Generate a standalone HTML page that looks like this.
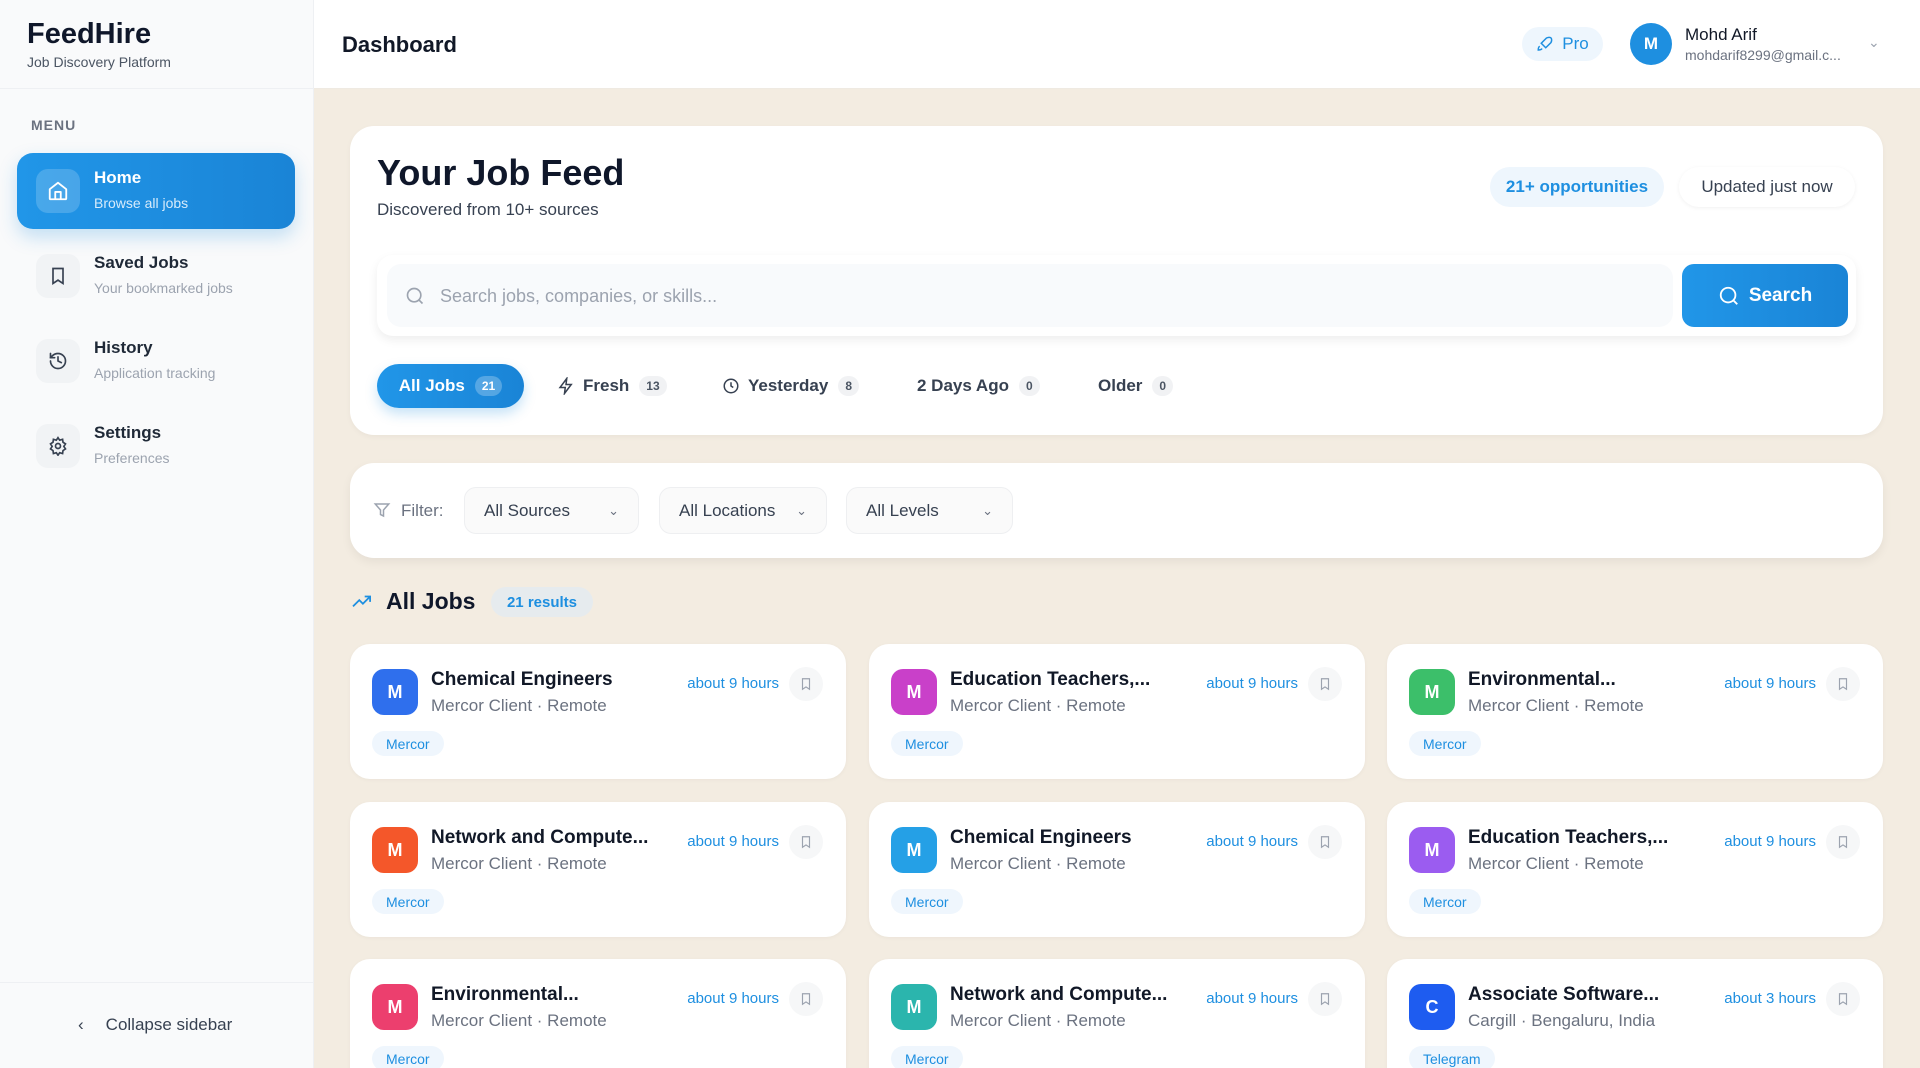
<!DOCTYPE html>
<html style="width:1920px;height:1068px;overflow:hidden"><head><meta charset="utf-8"><style>
*{box-sizing:border-box;margin:0;padding:0}
body{width:1920px;height:1068px;overflow:hidden;font-family:"Liberation Sans",sans-serif;background:#f3ece1;color:#111827}
#wrap{position:relative;width:1920px;height:1068px;overflow:hidden;background:#f3ece1}
.abs{position:absolute}
.side{left:0;top:0;width:314px;height:1068px;background:#f9fafb;border-right:1px solid #eef0f3}
.nav{position:absolute;left:17px;width:278px;height:76px;border-radius:16px}
.nav .ic{position:absolute;left:19px;top:16px;width:44px;height:44px;border-radius:12px;background:#f1f3f5;display:flex;align-items:center;justify-content:center}
.nav .t{position:absolute;left:77px;top:15px;font-size:17px;font-weight:bold;color:#1f2937}
.nav .s{position:absolute;left:77px;top:42px;font-size:14px;color:#9ca3af}
.card{background:#fff;border-radius:24px;box-shadow:0 2px 6px rgba(0,0,0,.04)}
.pill{position:absolute;border-radius:20px;display:flex;align-items:center;justify-content:center;font-size:17px}
.tab{position:absolute;top:364px;height:44px;display:flex;align-items:center;font-size:17px;font-weight:bold;color:#374151}
.cnt{display:inline-block;margin-left:10px;background:#f1f2f4;border-radius:10px;font-size:12px;padding:3px 7px;color:#4b5563}
.sel{position:absolute;top:487px;height:47px;border:1px solid #eeeff1;background:#fafafa;border-radius:12px;font-size:17px;color:#374151;padding:0 19px;display:flex;align-items:center;justify-content:space-between}
.job{position:absolute;width:496px;height:135px;background:#fff;border-radius:20px;box-shadow:0 1px 4px rgba(0,0,0,.04)}
.job .lg{position:absolute;left:22px;top:25px;width:46px;height:46px;border-radius:12px;color:#fff;font-weight:bold;font-size:18px;display:flex;align-items:center;justify-content:center}
.job .tt{position:absolute;left:81px;top:25px;font-size:19px;font-weight:bold;color:#111827}
.job .sb{position:absolute;left:81px;top:52px;font-size:17px;color:#6b7280}
.job .tm{position:absolute;right:67px;top:31px;font-size:15px;color:#1e8fe0}
.job .bm{position:absolute;left:439px;top:23px;width:34px;height:34px;border-radius:50%;background:#f6f7f8;display:flex;align-items:center;justify-content:center}
.job .tg{position:absolute;left:22px;top:87px;height:25px;padding:0 14px;border-radius:13px;background:#eff6fd;color:#1e8fe0;font-size:14px;display:flex;align-items:center}
</style></head><body><div id="wrap">
<div class="abs side">
  <div class="abs" style="left:27px;top:18px;font-size:29px;font-weight:bold;color:#0f172a">FeedHire</div>
  <div class="abs" style="left:27px;top:54px;font-size:14px;color:#4b5563">Job Discovery Platform</div>
  <div class="abs" style="left:0;top:88px;width:314px;height:1px;background:#eef0f3"></div>
  <div class="abs" style="left:31px;top:117px;font-size:14px;font-weight:bold;color:#6b7280;letter-spacing:1px">MENU</div>
  <div class="nav" style="top:153px;background:linear-gradient(90deg,#2196e8,#1a84d6);box-shadow:0 8px 18px rgba(30,143,224,.25)">
    <div class="ic" style="background:rgba(255,255,255,.18)"><svg width="22" height="22" viewBox="0 0 24 24" fill="none" stroke="#fff" stroke-width="2" stroke-linejoin="round"><path d="M3 10l9-7 9 7v10a1 1 0 01-1 1H4a1 1 0 01-1-1z"/><path d="M9 21v-8h6v8"/></svg></div>
    <div class="t" style="color:#fff">Home</div><div class="s" style="color:#d6ebfb">Browse all jobs</div>
  </div>
  <div class="nav" style="top:238px"><div class="ic"><svg width="20" height="20" viewBox="0 0 24 24" fill="none" stroke="#374151" stroke-width="2"><path d="M6 3h12v18l-6-4-6 4z"/></svg></div><div class="t">Saved Jobs</div><div class="s">Your bookmarked jobs</div></div>
  <div class="nav" style="top:323px"><div class="ic"><svg width="20" height="20" viewBox="0 0 24 24" fill="none" stroke="#374151" stroke-width="2" stroke-linecap="round"><path d="M3 12a9 9 0 109-9 9.7 9.7 0 00-6.7 2.7L3 8"/><path d="M3 3v5h5"/><path d="M12 7v5l4 2"/></svg></div><div class="t">History</div><div class="s">Application tracking</div></div>
  <div class="nav" style="top:408px"><div class="ic"><svg width="20" height="20" viewBox="0 0 24 24" fill="none" stroke="#374151" stroke-width="2"><circle cx="12" cy="12" r="3"/><path d="M12 2l2 3 3.5-1 .5 3.5 3 2-2 3 2 3-3 2-.5 3.5-3.5-1-2 3-2-3-3.5 1-.5-3.5-3-2 2-3-2-3 3-2 .5-3.5 3.5 1z"/></svg></div><div class="t">Settings</div><div class="s">Preferences</div></div>
  <div class="abs" style="left:0;top:982px;width:314px;height:1px;background:#eef0f3"></div>
  <div class="abs" style="left:78px;top:1015px;font-size:17px;color:#374151"><span style="margin-right:22px">‹</span>Collapse sidebar</div>
</div>
<div class="abs" style="left:314px;top:0;width:1606px;height:89px;background:#fff;border-bottom:1px solid #efeae2"></div>
<div class="abs" style="left:342px;top:32px;font-size:22px;font-weight:bold;color:#111827">Dashboard</div>
<div class="pill" style="left:1522px;top:27px;width:81px;height:34px;background:#eef6fd;color:#1e8fe0;font-size:17px"><svg width="18" height="18" viewBox="0 0 24 24" fill="none" stroke="#1e8fe0" stroke-width="2" style="margin-right:8px"><path d="M5 15c-2 1-2 5-2 5s4 0 5-2M14 4c4-2 6 0 6 0s2 2 0 6l-7 7-6-6z"/></svg>Pro</div>
<div class="abs" style="left:1630px;top:23px;width:42px;height:42px;border-radius:50%;background:#1e8fe0;color:#fff;font-weight:bold;font-size:17px;display:flex;align-items:center;justify-content:center">M</div>
<div class="abs" style="left:1685px;top:25px;font-size:17px;color:#111827">Mohd Arif</div>
<div class="abs" style="left:1685px;top:47px;font-size:14px;color:#6b7280">mohdarif8299@gmail.c...</div>
<div class="abs" style="left:1868px;top:34px;font-size:14px;color:#9ca3af">⌄</div>

<div class="abs card" style="left:350px;top:126px;width:1533px;height:309px"></div>
<div class="abs" style="left:377px;top:152px;font-size:36px;font-weight:bold;color:#0f172a">Your Job Feed</div>
<div class="abs" style="left:377px;top:200px;font-size:17px;color:#374151">Discovered from 10+ sources</div>
<div class="pill" style="left:1490px;top:167px;width:174px;height:40px;background:#eef6fd;color:#1e8fe0;font-weight:bold">21+ opportunities</div>
<div class="pill" style="left:1679px;top:167px;width:176px;height:40px;background:#fff;box-shadow:0 1px 4px rgba(0,0,0,.06);color:#374151">Updated just now</div>
<div class="abs" style="left:377px;top:255px;width:1479px;height:81px;border-radius:16px;background:#fff;box-shadow:0 4px 10px rgba(0,0,0,.07)"></div>
<div class="abs" style="left:387px;top:264px;width:1286px;height:63px;border-radius:14px;background:#f8fafc"></div>
<svg class="abs" style="left:405px;top:286px" width="20" height="20" viewBox="0 0 24 24" fill="none" stroke="#9ca3af" stroke-width="2"><circle cx="11" cy="11" r="8"/><path d="M21 21l-4.3-4.3"/></svg>
<div class="abs" style="left:440px;top:286px;font-size:18px;color:#9ca3af">Search jobs, companies, or skills...</div>
<div class="abs" style="left:1682px;top:264px;width:166px;height:63px;border-radius:12px;background:linear-gradient(90deg,#2196e8,#1a84d6);color:#fff;font-size:19px;font-weight:bold;display:flex;align-items:center;justify-content:center"><svg width="22" height="22" viewBox="0 0 24 24" fill="none" stroke="#fff" stroke-width="2" style="margin-right:9px"><circle cx="11" cy="11" r="8"/><path d="M21 21l-4.3-4.3"/></svg>Search</div>

<div class="tab" style="left:377px;width:147px;border-radius:22px;background:linear-gradient(90deg,#2196e8,#1a84d6);color:#fff;justify-content:center;box-shadow:0 6px 12px rgba(30,143,224,.25)">All Jobs<span class="cnt" style="background:rgba(255,255,255,.25);color:#fff">21</span></div>
<div class="tab" style="left:557px"><svg width="18" height="18" viewBox="0 0 24 24" fill="none" stroke="#374151" stroke-width="2" style="margin-right:8px"><path d="M13 2L4 14h7l-1 8 9-12h-7z"/></svg>Fresh<span class="cnt">13</span></div>
<div class="tab" style="left:722px"><svg width="18" height="18" viewBox="0 0 24 24" fill="none" stroke="#374151" stroke-width="2" style="margin-right:8px"><circle cx="12" cy="12" r="9"/><path d="M12 7v5l3 2"/></svg>Yesterday<span class="cnt">8</span></div>
<div class="tab" style="left:917px">2 Days Ago<span class="cnt">0</span></div>
<div class="tab" style="left:1098px">Older<span class="cnt">0</span></div>

<div class="abs card" style="left:350px;top:463px;width:1533px;height:95px;box-shadow:0 4px 10px rgba(0,0,0,.06)"></div>
<svg class="abs" style="left:373px;top:501px" width="18" height="18" viewBox="0 0 24 24" fill="none" stroke="#9ca3af" stroke-width="2"><path d="M3 4h18l-7 8v8l-4-2v-6z"/></svg>
<div class="abs" style="left:401px;top:501px;font-size:17px;color:#6b7280">Filter:</div>
<div class="sel" style="left:464px;width:175px">All Sources<span style="font-size:13px;color:#6b7280">⌄</span></div>
<div class="sel" style="left:659px;width:168px">All Locations<span style="font-size:13px;color:#6b7280">⌄</span></div>
<div class="sel" style="left:846px;width:167px">All Levels<span style="font-size:13px;color:#6b7280">⌄</span></div>

<svg class="abs" style="left:351px;top:592px" width="22" height="18" viewBox="0 0 24 20" fill="none" stroke="#1e8fe0" stroke-width="2"><path d="M2 16l7-7 4 4 8-8M15 5h6v6"/></svg>
<div class="abs" style="left:386px;top:588px;font-size:23px;font-weight:bold;color:#0f172a">All Jobs</div>
<div class="pill" style="left:491px;top:587px;width:102px;height:30px;background:#e6ebee;color:#1e8fe0;font-weight:bold;font-size:15px">21 results</div>

<div class="job" style="left:350px;top:644px"><div class="lg" style="background:#2f6fed">M</div><div class="tt">Chemical Engineers</div><div class="sb">Mercor Client · Remote</div><div class="tm">about 9 hours</div><div class="bm"><svg width="14" height="16" viewBox="0 0 24 24" fill="none" stroke="#9ca3af" stroke-width="2"><path d="M6 3h12v18l-6-4-6 4z"/></svg></div><div class="tg">Mercor</div></div>
<div class="job" style="left:869px;top:644px"><div class="lg" style="background:#c940c9">M</div><div class="tt">Education Teachers,...</div><div class="sb">Mercor Client · Remote</div><div class="tm">about 9 hours</div><div class="bm"><svg width="14" height="16" viewBox="0 0 24 24" fill="none" stroke="#9ca3af" stroke-width="2"><path d="M6 3h12v18l-6-4-6 4z"/></svg></div><div class="tg">Mercor</div></div>
<div class="job" style="left:1387px;top:644px"><div class="lg" style="background:#3cbf6a">M</div><div class="tt">Environmental...</div><div class="sb">Mercor Client · Remote</div><div class="tm">about 9 hours</div><div class="bm"><svg width="14" height="16" viewBox="0 0 24 24" fill="none" stroke="#9ca3af" stroke-width="2"><path d="M6 3h12v18l-6-4-6 4z"/></svg></div><div class="tg">Mercor</div></div>
<div class="job" style="left:350px;top:802px"><div class="lg" style="background:#f4572a">M</div><div class="tt">Network and Compute...</div><div class="sb">Mercor Client · Remote</div><div class="tm">about 9 hours</div><div class="bm"><svg width="14" height="16" viewBox="0 0 24 24" fill="none" stroke="#9ca3af" stroke-width="2"><path d="M6 3h12v18l-6-4-6 4z"/></svg></div><div class="tg">Mercor</div></div>
<div class="job" style="left:869px;top:802px"><div class="lg" style="background:#25a0e6">M</div><div class="tt">Chemical Engineers</div><div class="sb">Mercor Client · Remote</div><div class="tm">about 9 hours</div><div class="bm"><svg width="14" height="16" viewBox="0 0 24 24" fill="none" stroke="#9ca3af" stroke-width="2"><path d="M6 3h12v18l-6-4-6 4z"/></svg></div><div class="tg">Mercor</div></div>
<div class="job" style="left:1387px;top:802px"><div class="lg" style="background:#9b5cf0">M</div><div class="tt">Education Teachers,...</div><div class="sb">Mercor Client · Remote</div><div class="tm">about 9 hours</div><div class="bm"><svg width="14" height="16" viewBox="0 0 24 24" fill="none" stroke="#9ca3af" stroke-width="2"><path d="M6 3h12v18l-6-4-6 4z"/></svg></div><div class="tg">Mercor</div></div>
<div class="job" style="left:350px;top:959px"><div class="lg" style="background:#ec3f6e">M</div><div class="tt">Environmental...</div><div class="sb">Mercor Client · Remote</div><div class="tm">about 9 hours</div><div class="bm"><svg width="14" height="16" viewBox="0 0 24 24" fill="none" stroke="#9ca3af" stroke-width="2"><path d="M6 3h12v18l-6-4-6 4z"/></svg></div><div class="tg">Mercor</div></div>
<div class="job" style="left:869px;top:959px"><div class="lg" style="background:#2bb5ad">M</div><div class="tt">Network and Compute...</div><div class="sb">Mercor Client · Remote</div><div class="tm">about 9 hours</div><div class="bm"><svg width="14" height="16" viewBox="0 0 24 24" fill="none" stroke="#9ca3af" stroke-width="2"><path d="M6 3h12v18l-6-4-6 4z"/></svg></div><div class="tg">Mercor</div></div>
<div class="job" style="left:1387px;top:959px"><div class="lg" style="background:#1e5cf0">C</div><div class="tt">Associate Software...</div><div class="sb">Cargill · Bengaluru, India</div><div class="tm">about 3 hours</div><div class="bm"><svg width="14" height="16" viewBox="0 0 24 24" fill="none" stroke="#9ca3af" stroke-width="2"><path d="M6 3h12v18l-6-4-6 4z"/></svg></div><div class="tg">Telegram</div></div>
</div></body></html>
